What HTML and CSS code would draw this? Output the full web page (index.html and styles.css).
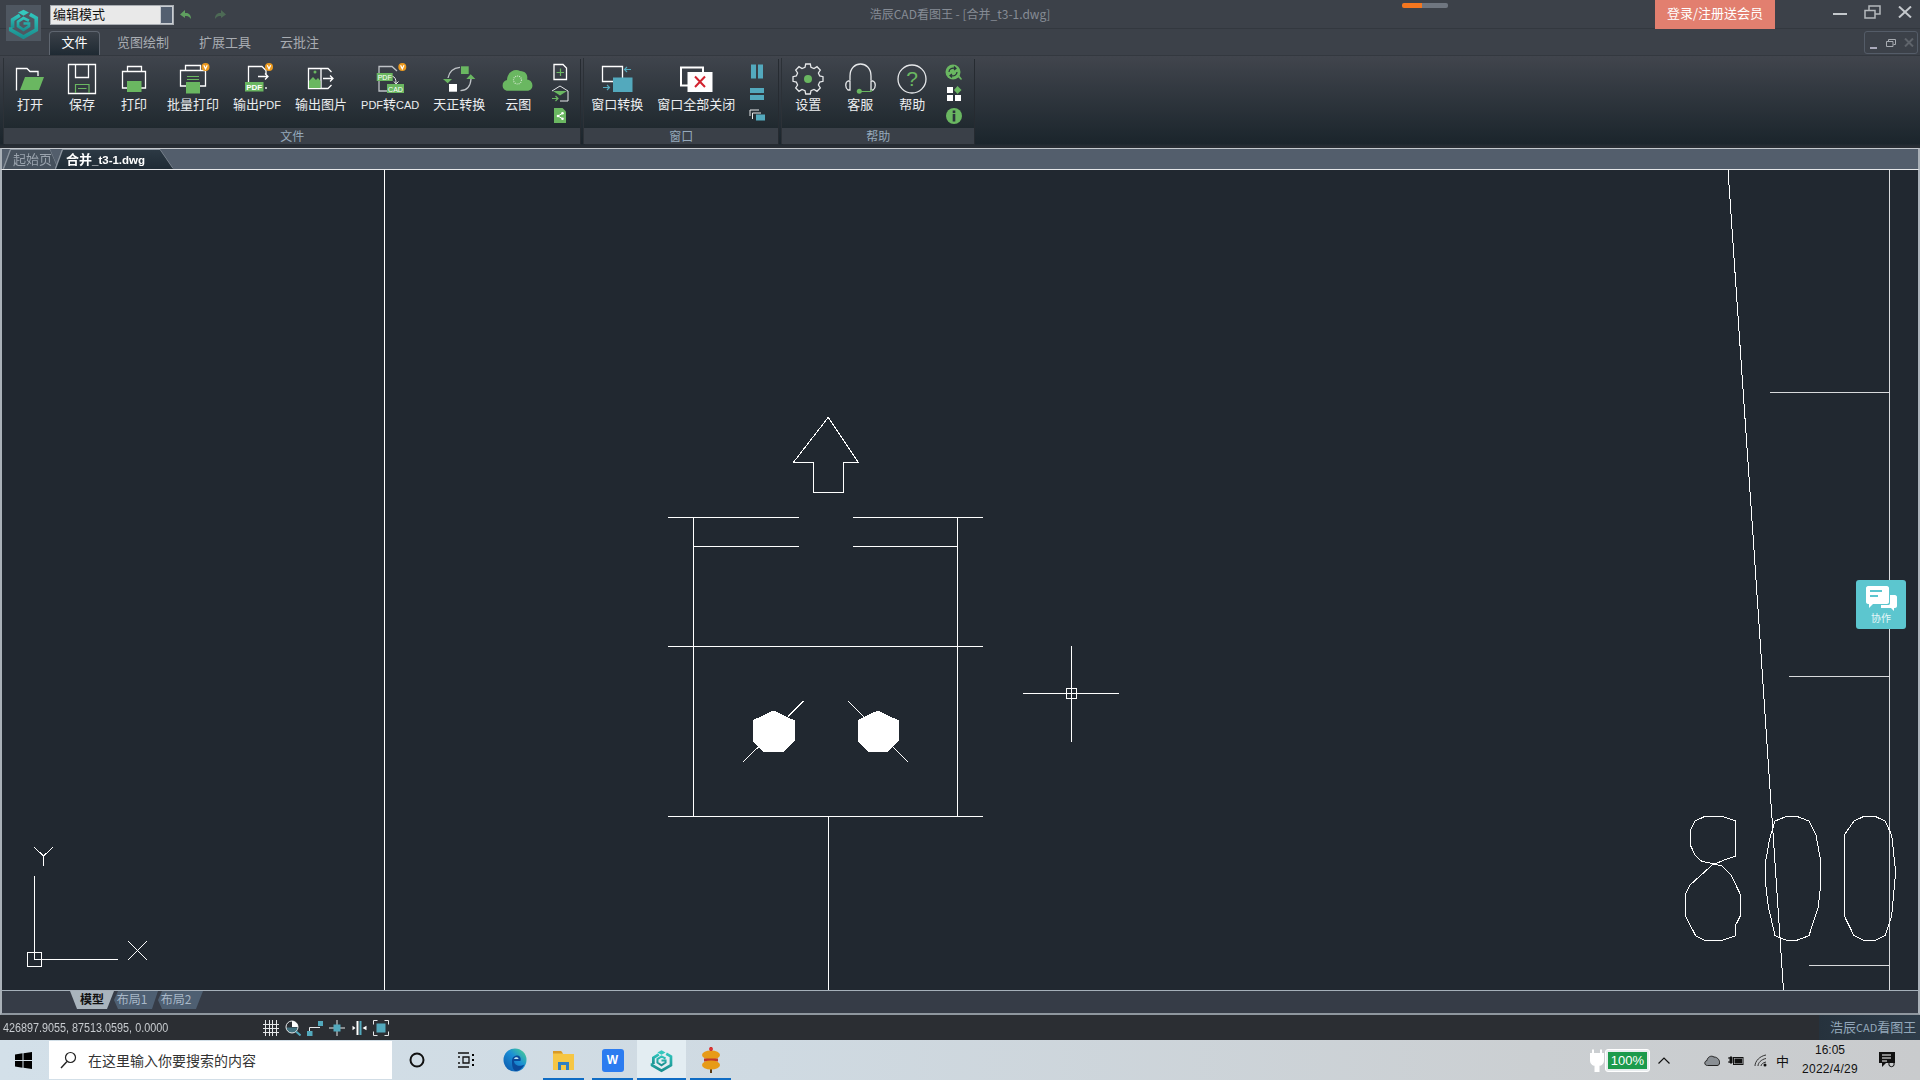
FILE: index.html
```html
<!DOCTYPE html>
<html lang="zh-CN">
<head>
<meta charset="utf-8">
<title>浩辰CAD看图王</title>
<link rel="stylesheet" href="styles.css">
</head>
<body>
<svg class="defs" width="0" height="0">
  <defs>
    <linearGradient id="cubeg" x1="0" y1="0" x2="0" y2="1"><stop offset="0" stop-color="#2fc4bb"/><stop offset="1" stop-color="#1a8f8f"/></linearGradient>
    <linearGradient id="edgeg" x1="0" y1="1" x2="1" y2="0"><stop offset="0" stop-color="#0b53a8"/><stop offset=".55" stop-color="#1b8fd6"/><stop offset="1" stop-color="#4fd88a"/></linearGradient>
    <symbol id="cube" viewBox="0 0 34 36">
      <path d="M5 23V14L13 9" fill="none" stroke="url(#cubeg)" stroke-width="4"/>
      <path d="M24 8L31 12V25L17 33L3 25V22" fill="none" stroke="url(#cubeg)" stroke-width="4"/>
      <path d="M23 15L17 12L11 16V21L17 25L23 21V18H17" fill="none" stroke="url(#cubeg)" stroke-width="3"/>
      <path d="M11 6L17 3L23 6L17 9.500Z" fill="#35c8be"/>
    </symbol>
  </defs>
</svg>
<div class="app">
  <div class="logo"><svg viewBox="0 0 34 36" width="31" height="33"><use href="#cube"/></svg></div>

  <header class="titlebar">
    <div class="tb-left">
      <div class="combo"><span class="combo-text">编辑模式</span><span class="combo-btn"></span></div>
      <svg class="qa" viewBox="0 0 14 12" width="14" height="12"><path d="M6 1 L1 5.500 L6 9 V7 C9 6.500 11 8 12 10 C12 6 10 3.500 6 4Z" fill="#5f9f5f"/></svg>
      <svg class="qa qa-redo" viewBox="0 0 14 12" width="14" height="12"><path d="M8 1 L13 5.500 L8 9 V7 C5 6.500 3 8 2 10 C2 6 4 3.500 8 4Z" fill="#4d6a55"/></svg>
    </div>
    <div class="doc-title">浩辰CAD看图王 - [合并_t3-1.dwg]</div>
    <div class="tb-right">
      <div class="progress"></div>
      <div class="login">登录/注册送会员</div>
      <div class="winctl">
        <svg viewBox="0 0 14 12" width="14" height="12"><rect x="0" y="7" width="14" height="2" fill="#c4c8cc"/></svg>
        <svg viewBox="0 0 17 14" width="17" height="14"><path d="M1 5.500H11V13H1Z M5 5V1H16V9H11.500" fill="none" stroke="#b4b8bc" stroke-width="1.500"/></svg>
        <svg viewBox="0 0 14 12" width="14" height="12"><path d="M1 0.500 L13 11.500 M13 0.500 L1 11.500" stroke="#c4c8cc" stroke-width="2"/></svg>
      </div>
    </div>
  </header>

  <nav class="tabrow">
    <div class="tab tab-on">文件</div>
    <div class="tab tab-a">览图绘制</div>
    <div class="tab tab-b">扩展工具</div>
    <div class="tab tab-c">云批注</div>
    <div class="mdi">
      <svg viewBox="0 0 8 4" width="8" height="4"><rect y="1" width="7" height="2" fill="#aab"/></svg>
      <svg viewBox="0 0 10 8" width="10" height="8"><path d="M.5 2.500H7V7.500H.5Z M2.500 2V.5H9.500V5.500H7.500" fill="none" stroke="#a8acb2"/></svg>
      <svg viewBox="0 0 10 9" width="10" height="9"><path d="M1 .5 L9 8.500 M9 .5 L1 8.500" stroke="#5f646b" stroke-width="2"/></svg>
    </div>
  </nav>

  <section class="ribbon">
    <div class="panel">
      <div class="panel-body">
        <div class="btn">
          <svg class="ico" viewBox="0 0 44 36"><path class="w" d="M8.500 29.500V7.500H19L22 10.500H30V15"/><path class="g" d="M17 16H36L31 29H12Z"/></svg>
          <span class="lbl">打开</span>
        </div>
        <div class="btn">
          <svg class="ico" viewBox="0 0 44 36"><path class="w" d="M8.500 3.500H35.500V32.500H8.500Z M15.500 3.500V16.500H28.500V3.500"/><path class="gs" d="M15.500 32V23.500H29V32 M18 27.500H26.500"/></svg>
          <span class="lbl">保存</span>
        </div>
        <div class="btn">
          <svg class="ico" viewBox="0 0 44 36"><path class="w" d="M15.500 10.500V5.500H29.500V10.500 M10.500 10.500H33.500V27H10.500Z"/><rect class="g" x="15" y="20" width="14.500" height="11"/></svg>
          <span class="lbl">打印</span>
        </div>
        <div class="btn btn-w">
          <svg class="ico" viewBox="0 0 44 36"><path class="w" d="M14.500 9.500V4.500H29.500V9.500 M9.500 9.500H34.500V25H9.500Z"/><path class="gs" d="M16 15.500H28 M16 18.500H28"/><rect class="g" x="15" y="21" width="14" height="11.500"/><circle class="o" cx="34.500" cy="6" r="4"/><path class="v" d="M32.800 4.200 L34.500 7.800 L36.200 4.200"/></svg>
          <span class="lbl">批量打印</span>
        </div>
        <div class="btn btn-w">
          <svg class="ico" viewBox="0 0 44 36"><path class="w" d="M13.500 21V5.500H27L31 9.500V13 M31 26V28"/><path class="w" d="M23 15.500H33 M30 12.500L33 15.500L30 18.500"/><rect class="g" x="10" y="21" width="18.500" height="9.500"/><text class="tag" x="19.200" y="29">PDF</text><circle class="o" cx="34" cy="6" r="4"/><path class="v" d="M32.300 4.200 L34 7.800 L35.700 4.200"/></svg>
          <span class="lbl">输出<span class="lat">PDF</span></span>
        </div>
        <div class="btn btn-w">
          <svg class="ico" viewBox="0 0 44 36"><path class="w" d="M9.500 7.500H22V27.500H9.500Z M22 7.500H29L32.500 11 M22 27.500H29L32.500 24"/><path class="w" d="M24 17.500H34 M31 14.500L34 17.500L31 20.500"/><path class="g" d="M10 27V20L14 16L17 19L19 17L21.500 20V27Z"/><circle class="g" cx="16" cy="11" r="1.500"/></svg>
          <span class="lbl">输出图片</span>
        </div>
        <div class="btn btn-w">
          <svg class="ico" viewBox="0 0 44 36"><path class="lg" d="M11 12V5.500H24L29 10 M11 20V30H19"/><path class="lw" d="M24 15C27 16 28 18 28 22 M26 20.500L28 23L30.500 20.500"/><rect class="g" x="8.700" y="12" width="16" height="8"/><text class="tag tag-sm" x="16.700" y="18.500">PDF</text><rect class="g" x="19" y="23" width="17" height="9"/><text class="tag tag-sm" x="27.500" y="30.500">CAD</text><circle class="o" cx="34.300" cy="6" r="4"/><path class="v" d="M32.600 4.200 L34.300 7.800 L36 4.200"/></svg>
          <span class="lbl"><span class="lat">PDF</span>转<span class="lat">CAD</span></span>
        </div>
        <div class="btn btn-w">
          <svg class="ico" viewBox="0 0 44 36"><path class="lg" d="M11 17C12 11 16 7 23 6.300 M23.500 29.700C30 29.500 33.500 25 34 18"/><rect class="g" x="24" y="5.300" width="7.700" height="7.700"/><rect class="wf" x="12" y="23" width="8" height="7.700"/><path class="g" d="M6 18H15L10.700 22.300Z M29.300 18H38.300L33.700 13.300Z"/></svg>
          <span class="lbl">天正转换</span>
        </div>
        <div class="btn">
          <svg class="ico" viewBox="0 0 44 36"><path class="g" d="M12 29.700C5 29.700 5 20 11 19C11 11 19 7 24 10C31 10 32 16 31 18.500C38 19 38.500 29.700 31 29.700Z"/><circle cx="21.500" cy="19" r="4" fill="none" stroke="#cfe6cb" stroke-width="1.200" stroke-dasharray="1 1"/></svg>
          <span class="lbl">云图</span>
        </div>
        <div class="small-col">
          <svg class="sm" viewBox="0 0 18 18"><path class="w" d="M3 1.500H12L15.500 5V16.500H3Z"/><path class="gs" d="M9.500 5.500V13 M5.500 9.500H13"/></svg>
          <svg class="sm" viewBox="0 0 18 18"><path class="lw" d="M1 6L9 1L17 6V16H9"/><path class="g" d="M2 6H16L9 10.500Z"/><path class="gs" d="M1 13.500H7 M4.500 11L7 13.500L4.500 16"/></svg>
          <svg class="sm" viewBox="0 0 18 18"><path class="g" d="M3 1H11.500L15 4.500V16H3Z"/><path class="wl" d="M12 6L7 9L12 12"/><circle class="wf" cx="7" cy="9" r="1.300"/><circle class="wf" cx="11.500" cy="6.300" r="1.300"/><circle class="wf" cx="11.500" cy="11.700" r="1.300"/></svg>
        </div>
      </div>
      <div class="panel-foot">文件</div>
    </div>

    <div class="panel">
      <div class="panel-body">
        <div class="btn btn-w">
          <svg class="ico" viewBox="0 0 44 36"><path class="w" d="M7.500 5.500H27.500V20.500H7.500Z"/><rect class="t" x="18" y="16.500" width="19.500" height="14.500"/><path class="ts" d="M36 8.500H30 M32 6L29.500 8.500 L32 11 M8 26.500H14 M12 24L14.500 26.500L12 29"/></svg>
          <span class="lbl">窗口转换</span>
        </div>
        <div class="btn btn-w">
          <svg class="ico" viewBox="0 0 44 36"><path class="w2" d="M7 6.500H29V24.500H7Z"/><rect class="wf" x="13.500" y="11" width="25" height="20"/><path class="x" d="M21 15.500L31 26 M31 15.500L21 26"/></svg>
          <span class="lbl">窗口全部关闭</span>
        </div>
        <div class="small-col">
          <svg class="sm" viewBox="0 0 18 18"><rect class="t" x="2" y="1.500" width="5" height="14"/><rect class="t" x="9" y="1.500" width="5" height="14"/></svg>
          <svg class="sm" viewBox="0 0 18 18"><rect class="t" x="1" y="3" width="14" height="5"/><rect class="t" x="1" y="10" width="14" height="5"/></svg>
          <svg class="sm" viewBox="0 0 18 18"><path class="lw" d="M1 9V3H10 M3.500 12V6H12"/><rect class="t" x="7" y="7.500" width="9" height="6"/></svg>
        </div>
      </div>
      <div class="panel-foot">窗口</div>
    </div>

    <div class="panel">
      <div class="panel-body">
        <div class="btn">
          <svg class="ico" viewBox="0 0 44 36"><path class="lw lw15" d="M19.700 5H24.300L25 8.300L28 9.600L31 7.700L34.300 11L32.400 14L33.700 17L37 17.700V22.300L33.700 23L32.400 26L34.300 29L31 32.300L28 30.400L25 31.700L24.300 35H19.700L19 31.700L16 30.400L13 32.300L9.700 29L11.600 26L10.300 23L7 22.300V17.700L10.300 17L11.600 14L9.700 11L13 7.700L16 9.600L19 8.300Z" transform="translate(0 -2)"/><circle class="g" cx="22" cy="18" r="4"/></svg>
          <span class="lbl">设置</span>
        </div>
        <div class="btn">
          <svg class="ico" viewBox="0 0 44 36"><path class="lw lw15" d="M12 19V15C12 -1 33 -1 33 15V19"/><path class="lw lw15" d="M10 20C7 21 7 27 10 29L12 29V20Z M35 20C38 21 38 27 35 29L33 29V20Z"/><path class="gs" d="M21 30.500H33L34 28.500"/><circle class="g" cx="21.300" cy="30.300" r="2.500"/></svg>
          <span class="lbl">客服</span>
        </div>
        <div class="btn">
          <svg class="ico" viewBox="0 0 44 36"><circle class="lw lw15" cx="22" cy="18" r="14"/><text class="q" x="22" y="25">?</text></svg>
          <span class="lbl">帮助</span>
        </div>
        <div class="small-col">
          <svg class="sm" viewBox="0 0 18 18"><circle class="g" cx="8" cy="9" r="7.500"/><path class="g" d="M12 13L16 17L17 16L14 12Z"/><path class="dk" d="M4 9C4 6 7 4.500 10 5.500 M12 9C12 12 9 13.500 6 12.500 M9 3.500L11 5.500L9 7 M7 11L5 12.500L7 14.500"/></svg>
          <svg class="sm" viewBox="0 0 18 18"><rect class="wf" x="2" y="2" width="6" height="6"/><path class="g" d="M12.500 1L16.500 5L12.500 9L9 5Z"/><rect class="wf" x="2" y="10" width="6" height="6"/><rect class="wf" x="10" y="10" width="6" height="6"/></svg>
          <svg class="sm" viewBox="0 0 18 18"><circle class="g" cx="9" cy="9" r="8"/><rect class="dkf" x="7.700" y="3.500" width="2.600" height="2.600"/><rect class="dkf" x="7.700" y="7" width="2.600" height="7.500"/></svg>
        </div>
      </div>
      <div class="panel-foot">帮助</div>
    </div>
  </section>

  <div class="docstrip">
    <div class="doctab-wrap"><div class="doctab">起始页</div></div>
    <div class="doctab-wrap doctab-wrap-on"><div class="doctab doctab-on">合并<span class="doc-sub">_t3-1.dwg</span></div></div>
  </div>

  <main class="canvas">
    <svg class="cad" viewBox="2 170 1916 820" width="1916" height="820">
      <line x1="384.500" y1="170" x2="384.500" y2="990"/>
      <polyline points="1728,170 1754.700,560 1783.500,990"/>
      <line class="dim" x1="1889.500" y1="170" x2="1889.500" y2="990"/>
      <line class="dim" x1="1770" y1="392.500" x2="1889" y2="392.500"/>
      <line class="dim" x1="1789" y1="676.500" x2="1889" y2="676.500"/>
      <line class="dim" x1="1809" y1="965.500" x2="1889" y2="965.500"/>

      <polygon points="828.300,417.300 793.300,462.500 813.500,462.500 813.500,492.500 843.500,492.500 843.500,462.500 858.300,462.500"/>
      <line x1="668" y1="517.500" x2="799" y2="517.500"/>
      <line x1="853" y1="517.500" x2="983" y2="517.500"/>
      <line x1="694" y1="546.500" x2="799" y2="546.500"/>
      <line x1="853" y1="546.500" x2="957" y2="546.500"/>
      <line x1="693.500" y1="517.500" x2="693.500" y2="816"/>
      <line x1="957.500" y1="517.500" x2="957.500" y2="816"/>
      <line x1="668" y1="646.500" x2="983" y2="646.500"/>
      <line x1="668" y1="816.500" x2="983" y2="816.500"/>
      <line x1="828.500" y1="817" x2="828.500" y2="990"/>
      <polygon class="solid" points="773.300,711 794,720.700 794,740.700 784,751 763.300,751 753,740.700 753,720.700"/>
      <polygon class="solid" points="877.700,711 898,720.700 898,740.700 888,751 868,751 858,740.700 858,720.700"/>
      <line x1="803.700" y1="701" x2="788" y2="716.700"/>
      <line x1="743" y1="761.700" x2="758.700" y2="746.700"/>
      <line x1="848" y1="701" x2="864.700" y2="717.700"/>
      <line x1="907.700" y1="761.700" x2="892.700" y2="746.700"/>

      <line x1="1023" y1="693.500" x2="1119" y2="693.500"/>
      <line x1="1071.500" y1="646" x2="1071.500" y2="742"/>
      <rect x="1066.500" y="688.500" width="10" height="10"/>

      <line x1="34.500" y1="876" x2="34.500" y2="959.500"/>
      <line x1="34.500" y1="959.500" x2="118" y2="959.500"/>
      <rect x="27.500" y="952.500" width="14" height="14"/>
      <polyline points="34.300,847.300 43.500,856 53,847.300"/>
      <line x1="43.500" y1="856" x2="43.500" y2="865.700"/>
      <line x1="128.300" y1="941.300" x2="147" y2="959.700"/>
      <line x1="147" y1="941.300" x2="128.300" y2="959.700"/>

      <g transform="translate(1660 560) scale(.33333)">
        <polygon points="135,769 185,769 227,783 227,888 185,903 165,912 125,904 105,885 91,855 91,812 105,783"/>
        <polygon points="160,912 185,917 213,945 241,1003 241,1068 227,1095 227,1127 185,1141 133,1141 107,1127 76,1068 76,1003 90,975"/>
        <polygon points="345,783 380,769 410,769 447,783 468,825 481,897 481,985 475,1040 447,1127 410,1141 380,1141 345,1127 325,1040 316,965 316,910 328,840"/>
        <polygon points="553,825 582,783 612,769 645,769 675,783 695,825 707,935 695,1068 675,1127 645,1141 612,1141 582,1127 553,1068"/>
      </g>
    </svg>
    <div class="collab">
      <svg viewBox="0 0 32 26" width="32" height="26"><path class="wf" d="M3 1H22C23 1 24 2 24 3V17C24 18 23 19 22 19H8L4 23V19H3C2 19 1 18 1 17V3C1 2 2 1 3 1Z"/><path class="c-dk" d="M5 6H17 M5 11H13"/><path class="wf" d="M25 10H30C31 10 32 11 32 12V21C32 22 31 23 30 23H29V26L26 23H16V20H23C24.500 20 25 19.500 25 18Z"/></svg>
      <span>协作</span>
    </div>
  </main>

  <div class="layoutbar">
    <div class="ltab ltab-on">模型</div>
    <div class="ltab ltab-1">布局1</div>
    <div class="ltab ltab-2">布局2</div>
  </div>

  <footer class="statusbar">
    <span class="coords">426897.9055, 87513.0595, 0.0000</span>
    <div class="st-icons">
      <svg viewBox="0 0 16 16" width="16" height="16"><path class="lw" d="M0 4.500H16 M0 8.500H16 M0 12.500H16 M2.500 0V16 M6.500 0V16 M9.500 0V16 M13.500 0V16"/></svg>
      <svg viewBox="0 0 16 16" width="16" height="16"><path class="t" d="M1.500 7.500H12.500C12.500 11 10 13 7 13C4 13 1.500 11 1.500 7.500Z" opacity=".55"/><circle class="lw" cx="7" cy="7" r="6"/><path class="wf" d="M7 1C10 1 13 3.500 13 7H7Z"/><path class="ts2" d="M11 11.500L15.500 15.500"/></svg>
      <svg viewBox="0 0 16 16" width="16" height="16"><path class="lw" d="M2.500 12V7.500H13"/><rect class="t" x="0" y="11" width="5.500" height="5"/><rect class="t" x="11" y="1" width="5" height="5"/></svg>
      <svg viewBox="0 0 16 16" width="16" height="16"><path class="lw" d="M8 0V16 M0 8H16"/><rect class="t" x="4.500" y="4.500" width="7" height="7"/></svg>
      <svg viewBox="0 0 16 16" width="16" height="16"><path class="w2" d="M6.500 1V15"/><rect class="t" x="8.500" y="1" width="2" height="14"/><path class="wf" d="M4.500 8L1.500 5.800V10.200Z M11.500 8L15.500 5.800V10.200Z"/></svg>
      <svg viewBox="0 0 16 16" width="16" height="16"><path class="lw" d="M.5 4.500V.5H4.500 M11.500 .5H15.500V4.500 M15.500 11.500V15.500H11.500 M4.500 15.500H.5V11.500"/><rect class="t" x="3.500" y="3.500" width="9" height="9"/></svg>
    </div>
    <div class="brand">浩辰<span class="brand-lat">CAD</span>看图王</div>
  </footer>

  <div class="taskbar">
    <div class="start">
      <svg viewBox="0 0 17 17" width="17" height="17"><path d="M0 2.500L7.500 1.300V8H0Z M8.500 1.200L17 0V8H8.500Z M0 9H7.500V15.700L0 14.500Z M8.500 9H17V17L8.500 15.800Z" fill="#000"/></svg>
    </div>
    <div class="search">
      <svg viewBox="0 0 17 18" width="17" height="18"><circle cx="10.500" cy="6.500" r="5" fill="none" stroke="#222" stroke-width="1.200"/><path d="M7 10.500L1 17" stroke="#222" stroke-width="1.400"/></svg>
      <span>在这里输入你要搜索的内容</span>
    </div>
    <div class="slot"><svg viewBox="0 0 16 16" width="16" height="16"><circle cx="8" cy="8" r="6.500" fill="none" stroke="#111" stroke-width="2"/></svg></div>
    <div class="slot"><svg viewBox="0 0 16 16" width="16" height="16"><path d="M0 1H11 M0 15H11 M0 5H2 M0 11H2 M5 5H11V11H5Z" fill="none" stroke="#111" stroke-width="1.300"/><rect x="14" y="2" width="2" height="2"/><rect x="14" y="7" width="2" height="2"/><rect x="14" y="12" width="2" height="2"/></svg></div>
    <div class="slot"><svg viewBox="0 0 24 24" width="24" height="24"><circle cx="12" cy="12" r="11.500" fill="url(#edgeg)"/><path d="M9 14C8.500 9 12 7 15 7.500C18 8.500 18 11.500 17.500 13H11C11 17 16 19.500 21.500 16.500C19 21 15.500 23 12.500 23C9.500 22 9 17 9 14Z" fill="#0a4a9a"/><path d="M11 11C11.500 9.500 13 9 14.500 9.500C15.500 10 15.500 11 15.500 11Z" fill="#bfe3f2"/></svg></div>
    <div class="slot run"><svg viewBox="0 0 21 21" width="21" height="21"><path d="M0 1H8L10 4H21V20H0Z" fill="#f6c644"/><path d="M0 1H8L10 3.500H0Z" fill="#d99a26"/><path d="M5 20V12H16V20H13V15H8V20Z" fill="#2f7fc4"/></svg></div>
    <div class="slot run"><div class="wps">W</div></div>
    <div class="slot run run-on"><svg viewBox="0 0 34 36" width="23" height="25"><use href="#cube"/></svg></div>
    <div class="slot run"><svg viewBox="0 0 20 26" width="20" height="26"><rect x="9" y="0" width="2" height="26" fill="#5b3a12"/><ellipse cx="10" cy="8" rx="9" ry="4.500" fill="#e79b17"/><rect x="3" y="11.500" width="14" height="3" fill="#c0392b"/><ellipse cx="10" cy="18" rx="9" ry="4.500" fill="#e79b17"/><circle cx="10" cy="2" r="2" fill="#d33"/></svg></div>

    <div class="tray">
      <svg class="plug" viewBox="0 0 14 23" width="14" height="23"><path d="M3 0.500V5 M11 0.500V5 M1 5H13V12C13 15 10 16 8.500 16V23H5.500V16C4 16 1 15 1 12Z" fill="#fff" stroke="#fff" stroke-width="2"/></svg>
      <div class="batt"><span class="batt-fill">100%</span></div>
      <svg class="chev" viewBox="0 0 12 7" width="12" height="7"><path d="M.5 6.500L6 1L11.500 6.500" fill="none" stroke="#111" stroke-width="1.200"/></svg>
      <svg class="tr-cloud" viewBox="0 0 16 11" width="16" height="11"><path d="M3.500 10.500C0 10.500 0 6 3 5.500C3.500 2 7 0 10 2C14 2 16 6 15.500 8C15.500 9.500 14.500 10.500 13 10.500Z" fill="#8a8f94" stroke="#222"/></svg>
      <svg class="tr-bat" viewBox="0 0 16 11" width="16" height="11"><path d="M0 3H2 M0 7H2 M2 2H4V8H2Z" fill="#111" stroke="#111"/><rect x="5.500" y="2.500" width="9.500" height="7" fill="none" stroke="#111"/><rect x="6.500" y="3.500" width="7.500" height="5" fill="#111"/></svg>
      <svg class="tr-wifi" viewBox="0 0 13 13" width="13" height="13"><path d="M1 12C1 7 6 2 12 1 M4 12C4 9 7 5.500 12 4.500 M7 12C7 10.500 9 8.500 12 8" fill="none" stroke="#333"/><circle cx="11" cy="11" r="1.500" fill="#111"/></svg>
      <span class="ime">中</span>
      <div class="clock"><span>16:05</span><span class="clock-date">2022/4/29</span></div>
      <svg class="notif" viewBox="0 0 16 16" width="16" height="16"><path d="M0 0H16V11H7L3 15V11H0Z" fill="#111"/><path d="M3 3H12 M3 6H12 M3 9H8" stroke="#fff"/><circle cx="12.500" cy="12" r="2.700" fill="none" stroke="#111"/></svg>
    </div>
  </div>
</div>
</body>
</html>
```
FILE: styles.css
```css
* { box-sizing: border-box; }
html, body { margin: 0; padding: 0; }
body {
  width: 1920px; height: 1080px; overflow: hidden;
  font-family: "Noto Sans CJK SC", "Liberation Sans", sans-serif;
  background: #212830;
}
.defs { display: block; height: 0; }
.app { position: relative; display: flex; flex-direction: column; width: 1920px; height: 1080px; background: #3b4149; }
.logo { position: absolute; left: 6px; top: 5px; z-index: 2; width: 35px; height: 36px; padding: 2px 0 0 2px; background: #4f5761; }

/* title bar */
.titlebar { height: 29px; display: grid; grid-template-columns: 1fr auto 1fr; align-items: stretch; background: #3c4149; border-bottom: 1px solid #33383f; }
.tb-left { display: flex; align-items: center; padding: 0 0 0 50px; }
.combo { width: 124px; height: 20px; display: flex; align-items: stretch; border: 1px solid #a9adb2; background: #e9e9e9; }
.combo-text { flex: 1; font-size: 13px; line-height: 16px; color: #111; padding-left: 2px; }
.combo-btn { width: 13px; background: #535f70; border: 1px solid #c9cdd2; }
.qa { margin-left: 5px; }
.qa-redo { margin-left: 20px; }
.doc-title { font-size: 12px; line-height: 28px; color: #868c95; }
.tb-right { display: flex; justify-content: flex-end; align-items: flex-start; position: relative; }
.progress { position: absolute; left: 352px; top: 3px; width: 46px; height: 5px; border-radius: 2px; background: linear-gradient(90deg, #f4761f 0 43%, #6f7680 43%); }
.login { width: 120px; height: 29px; background: #e27f6f; color: #fff; font-size: 13px; line-height: 26px; text-align: center; margin-right: 58px; }
.winctl { display: flex; align-items: center; gap: 17px; height: 24px; padding-right: 8px; }

/* tabs */
.tabrow { height: 27px; display: flex; align-items: flex-end; position: relative; background: #3c4149; border-bottom: 1px solid #33383f; padding-left: 49px; }
.tab { font-size: 13px; line-height: 22px; height: 24px; color: #a8acb2; }
.tab-on { width: 51px; text-align: center; color: #fff; border: 1px solid #5f6670; border-bottom: none; border-radius: 4px 4px 0 0; background: linear-gradient(#3a4048, #1f2a33); line-height: 20px; }
.tab-a { margin-left: 17px; }
.tab-b { margin-left: 30px; }
.tab-c { margin-left: 29px; }
.mdi { position: absolute; right: 2px; top: 2px; width: 54px; height: 23px; display: flex; align-items: center; justify-content: space-between; padding: 0 3px 0 5px; border: 1px solid #545c68; border-radius: 3px; }
.mdi svg:first-child { margin-top: 10px; }

/* ribbon */
.ribbon { height: 92px; display: flex; gap: 4px; padding: 2px 0 3px 4px; background: linear-gradient(#41454d, #1b252c 96%, #2a2f36); border-bottom: 1px solid #2a2e34; }
.panel { display: flex; flex-direction: column; box-shadow: 1px 1px 0 #262b31, -1px 0 0 #2c3137; }
.panel-body { flex: 1; display: flex; background: linear-gradient(#3f444c, #20292f); }
.panel-foot { height: 16px; background: #3a4048; color: #95a9bb; font-size: 12px; line-height: 16px; text-align: center; }
.btn { min-width: 52px; display: flex; flex-direction: column; align-items: center; }
.btn-w { padding: 0 7px; }
.ico { width: 44px; height: 36px; margin-top: 3px; flex: none; overflow: visible; }
.lbl { font-size: 13px; line-height: 17px; color: #eceef0; white-space: nowrap; margin-top: -2px; }
.lat { font-family: "Liberation Sans", sans-serif; font-size: 11px; }
.small-col { width: 32px; display: flex; flex-direction: column; align-items: center; padding-top: 5px; gap: 4px; margin-right: 4px; }
.sm { width: 18px; height: 18px; }

/* icon paints */
.w { fill: none; stroke: #fff; stroke-width: 1.300; }
.w2 { fill: none; stroke: #fff; stroke-width: 2; }
.lg { fill: none; stroke: #bfc3c7; stroke-width: 1.300; }
.lw { fill: none; stroke: #e6e8ea; stroke-width: 1; }
.lw15 { stroke-width: 1.300; }
.wl { fill: none; stroke: #fff; stroke-width: 1; }
.g { fill: #6ab761; }
.gs { fill: none; stroke: #6ab761; stroke-width: 1.200; }
.wf { fill: #fff; }
.t { fill: #53a9bd; }
.ts { fill: none; stroke: #53a9bd; stroke-width: 1.200; }
.ts2 { fill: none; stroke: #53a9bd; stroke-width: 2; }
.o { fill: #ec9a1f; }
.v { fill: none; stroke: #fff; stroke-width: 1.200; }
.x { fill: none; stroke: #d2232f; stroke-width: 2; }
.dk { fill: none; stroke: #2b343c; stroke-width: 1.200; }
.dkf { fill: #2b343c; }
.c-dk { fill: none; stroke: #5cc6cf; stroke-width: 2; }
.tag { fill: #fff; font-family: "Liberation Sans", sans-serif; font-size: 8px; font-weight: 700; text-anchor: middle; }
.tag-sm { font-weight: 400; font-size: 7px; }
.q { fill: #6ab761; font-family: "Liberation Sans", sans-serif; font-size: 21px; text-anchor: middle; }

/* document tabs */
.docstrip { height: 22px; display: flex; align-items: flex-end; background: #535e6c; border-top: 1px solid #c4c9ce; border-bottom: 1px solid #e4e6e8; padding-left: 2px; border-left: 2px solid #aab1b8; border-right: 2px solid #aab1b8; }
.doctab-wrap { filter: drop-shadow(0 -1px 0 #8a939d) drop-shadow(-1px 0 0 #8a939d); }
.doctab-wrap-on { margin-left: -4px; }
.doctab { height: 19px; width: 56px; font-size: 13px; line-height: 17px; color: #9aa3ad; padding-left: 9px; background: #46515d; clip-path: polygon(0 100%, 7px 0, 46px 0, 54px 100%); }
.doctab-on { width: 118px; padding-left: 10px; color: #fff; font-weight: 700; background: linear-gradient(#2c3944, #1f2b35); clip-path: polygon(0 100%, 7px 0, 104px 0, 117px 100%); }
.doc-sub { font-family: "Liberation Sans", sans-serif; font-size: 11.500px; }

/* drawing */
.canvas { position: relative; height: 820px; background: #212830; border-left: 2px solid #aab1b8; border-right: 2px solid #aab1b8; }
.cad { display: block; }
.cad line, .cad polyline, .cad polygon, .cad rect { fill: none; stroke: #fff; stroke-width: 1; vector-effect: non-scaling-stroke; shape-rendering: crispEdges; }
.cad .solid { fill: #fff; }
.cad .dim { stroke: #d8dadc; }
.collab { position: absolute; left: 1854px; top: 410px; width: 50px; height: 49px; border-radius: 3px; background: #5cc6cf; display: flex; flex-direction: column; align-items: center; padding-top: 5px; color: #e6f7f8; font-size: 10px; line-height: 12px; }
.collab svg { margin-bottom: 1px; }

/* layout tabs */
.layoutbar { height: 25px; display: flex; padding-left: 68px; background: #363c47; border-top: 1px solid #a6b0ba; border-bottom: 2px solid #8f979f; border-left: 2px solid #aab1b8; border-right: 2px solid #aab1b8; }
.ltab { height: 18px; font-size: 12px; line-height: 16px; text-align: center; color: #a9b8c8; background: #4e5f72; }
.ltab-on { width: 44px; color: #111; font-weight: 700; background: #a9b4bd; clip-path: polygon(0 0, 44px 0, 37px 100%, 7px 100%); }
.ltab-1 { width: 46px; margin-left: -2px; padding-right: 6px; clip-path: polygon(6px 0, 46px 0, 40px 100%, 6px 100%, 2px 50%); }
.ltab-2 { width: 48px; margin-left: -3px; padding-right: 6px; clip-path: polygon(7px 0, 48px 0, 41px 100%, 7px 100%, 3px 50%); }

/* status */
.statusbar { height: 25px; display: flex; align-items: center; background: #2b2e33; padding-left: 3px; }
.coords { display: inline-block; width: 260px; font-family: "Liberation Sans", sans-serif; font-size: 12px; color: #c8ccd0; white-space: nowrap; transform: scaleX(.9); transform-origin: left; }
.st-icons { display: flex; gap: 6px; }
.brand { margin-left: auto; width: 101px; height: 25px; padding-left: 11px; font-size: 13px; line-height: 24px; color: #93a7b9; background: linear-gradient(90deg, #26323d, #2e3c49); white-space: nowrap; }
.brand-lat { font-size: 11px; }

/* taskbar */
.taskbar { height: 40px; display: flex; align-items: center; background: linear-gradient(90deg, #d3e0e9, #cfdae2 40%, #cbcfd2 80%, #c9cbcd); }
.start { width: 49px; display: flex; justify-content: center; padding-right: 2px; }
.search { width: 343px; height: 38px; display: flex; align-items: center; gap: 11px; padding-left: 11px; background: #fff; font-size: 14px; color: #333; }
.slot { position: relative; width: 49px; height: 40px; display: flex; align-items: center; justify-content: center; }
.run::after { content: ""; position: absolute; left: 4px; right: 4px; bottom: 0; height: 2px; background: #0f6cc4; }
.run-on { background: #e3edf2; }
.run-on::after { left: 0; right: 0; }
.wps { width: 22px; height: 23px; border-radius: 3px; background: #2c7cf0; color: #fff; font: 700 12px/23px "Liberation Sans", sans-serif; text-align: center; }
.tray { margin-left: auto; display: flex; align-items: center; height: 40px; }
.plug { margin-right: 1px; }
.batt { width: 45px; height: 23px; padding: 2px; border: 1px solid #fff; border-radius: 3px; background: #e9edef; }
.batt-fill { display: block; width: 100%; height: 100%; background: #1c9b4c; color: #fff; font: 13px/17px "Liberation Sans", sans-serif; text-align: center; }
.chev { margin-left: 8px; }
.tr-cloud { margin-left: 34px; }
.tr-bat { margin-left: 8px; }
.tr-wifi { margin-left: 10px; }
.ime { margin-left: 9px; font-size: 13px; color: #111; }
.clock { width: 68px; margin-left: 7px; display: flex; flex-direction: column; align-items: center; font: 12px/19px "Liberation Sans", sans-serif; color: #111; }
.clock-date { letter-spacing: .3px; }
.notif { margin: 0 25px 0 15px; }
```
